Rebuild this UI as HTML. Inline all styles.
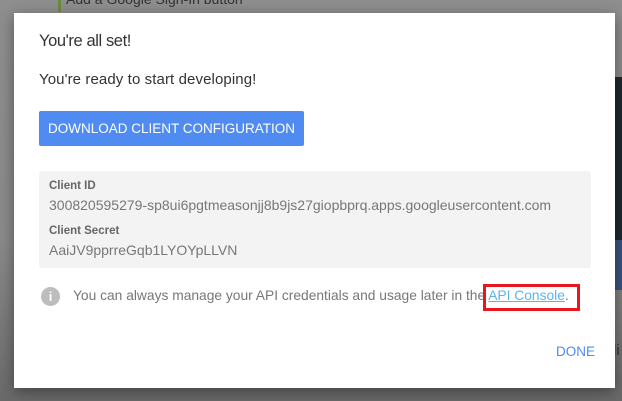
<!DOCTYPE html>
<html><head><style>
body{margin:0;width:622px;height:401px;overflow:hidden;position:relative;background:linear-gradient(#8e8e8e,#8a8a8a 60%,#6a6a6a);font-family:"Liberation Sans",sans-serif;}
.stripe{position:absolute;left:58px;top:0;width:3px;height:12px;background:#6d8a3f}
.img{position:absolute;left:615px;top:77px;width:7px;height:213px;background:#1c2a30}
.img2{position:absolute;left:615px;top:240px;width:7px;height:50px;background:#3a5480}
.dlg{position:absolute;left:14px;top:13px;width:601px;height:375px;background:#fff;box-shadow:0 4px 14px rgba(0,0,0,.4)}
.t{position:absolute;white-space:nowrap}
</style></head><body>
<div class="stripe"></div>
<div class="t" style="left:66px;top:-9px;font-size:14px;color:#333">Add a Google Sign-In button</div>
<div class="img"></div><div class="img2"></div>
<div class="t" style="left:613px;top:342px;font-size:15px;color:#333">li</div>
<div class="dlg">
<div class="t" style="left:25px;top:19px;font-size:16.5px;letter-spacing:-0.4px;color:#333">You're all set!</div>
<div class="t" style="left:25px;top:58px;font-size:15px;letter-spacing:0.1px;color:#333">You're ready to start developing!</div>
<div class="t" style="left:25px;top:98px;width:265px;height:35px;background:#4f8bf0;border-radius:2px;color:#fff;font-size:13.5px;line-height:35px;text-align:center">DOWNLOAD CLIENT CONFIGURATION</div>
<div class="t" style="left:25px;top:158px;width:552px;height:97px;background:#f3f3f3;border-radius:3px"></div>
<div class="t" style="left:35px;top:167px;font-size:11.5px;font-weight:bold;color:#666">Client ID</div>
<div class="t" style="left:35px;top:184px;font-size:14px;color:#777">300820595279-sp8ui6pgtmeasonjj8b9js27giopbprq.apps.googleusercontent.com</div>
<div class="t" style="left:35px;top:212px;font-size:11.5px;font-weight:bold;color:#666">Client Secret</div>
<div class="t" style="left:35px;top:229px;font-size:14px;color:#777">AaiJV9pprreGqb1LYOYpLLVN</div>
<div class="t" style="left:27px;top:274px;width:19px;height:19px;border-radius:50%;background:#bdbdbd;color:#fff;font-size:13px;font-weight:bold;text-align:center;line-height:19px">i</div>
<div class="t" style="left:59px;top:275px;font-size:13.8px;color:#777">You can always manage your API credentials and usage later in the <span style="color:#5ab4ef;text-decoration:underline">API Console</span>.</div>
<div class="t" style="left:469px;top:271px;width:91px;height:21px;border:3px solid #e8171f"></div>
<div class="t" style="left:542px;top:331px;font-size:13.5px;color:#4f8bf0">DONE</div>
</div>
</body></html>
